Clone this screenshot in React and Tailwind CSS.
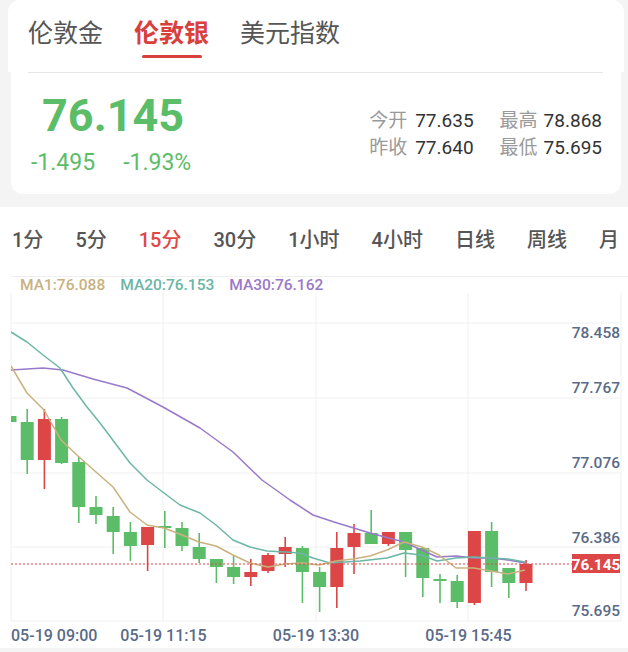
import React from 'react';

const GREEN = '#5cbd68';
const RED = '#dc4646';

// [bodyTop, bodyBottom, wickTop, wickBottom, up]
const candles = [
  [416, 422, 416, 422, false],
  [422, 460, 409, 474, false],
  [419, 460, 409, 489, true],
  [419, 463, 417, 464, false],
  [462, 507, 457, 523, false],
  [507, 515, 496, 524, false],
  [516, 532, 507, 554, false],
  [532, 546, 522, 561, false],
  [527, 545, 527, 571, true],
  [526, 528, 511, 548, false],
  [528, 546, 522, 551, false],
  [547, 559, 533, 563, false],
  [559, 567, 559, 583, false],
  [567, 577, 556, 584, false],
  [572, 577, 559, 586, true],
  [555, 571, 553, 573, true],
  [547, 554, 537, 567, true],
  [548, 572, 546, 603, false],
  [572, 587, 567, 612, false],
  [548, 587, 532, 608, true],
  [533, 547, 524, 574, true],
  [533, 544, 510, 544, false],
  [532, 544, 532, 546, true],
  [532, 550, 532, 577, false],
  [548, 578, 548, 597, false],
  [579, 581, 574, 603, false],
  [581, 602, 575, 608, false],
  [531, 603, 531, 605, true],
  [531, 572, 522, 587, false],
  [568, 583, 568, 598, false],
  [564, 583, 560, 591, true],
];

const ma1 = '11,366 27,393 44,410 61,440 78,456 96,472 113,487 130,512 147,525 164,528 182,535 199,542 216,546 233,555 250,563 268,567 285,564 302,563 319,565 336,561 353,559 370,556 387,550 404,542 422,547 439,555 456,568 474,568 491,571 508,574 525,570';
const ma20 = '11,332 27,342 43,355 60,368 73,388 87,407 100,423 115,443 130,463 147,480 164,493 180,505 200,513 216,525 233,540 250,547 267,551 285,552 300,553 313,558 330,563 360,561 387,558 404,553 421,555 437,561 456,558 474,557 491,558 508,559 525,562';
const ma30 = '11,370 43,368 63,370 93,379 127,388 163,407 200,428 233,452 262,480 290,500 313,515 334,522 370,533 404,542 437,557 456,556 474,558 491,558 508,560 525,563';

const tabs = ['伦敦金', '伦敦银', '美元指数'];
const periods = ['1分', '5分', '15分', '30分', '1小时', '4小时', '日线', '周线', '月'];

const priceLabels = [
  ['78.458', 337.5],
  ['77.767', 392.5],
  ['77.076', 467.5],
  ['76.386', 542.5],
  ['75.695', 615.5],
];

const Chart = () => (
  <svg width="628" height="355" viewBox="0 293 628 355" className="block">
    <defs>
      <clipPath id="plot">
        <rect x="11" y="293" width="610" height="328" />
      </clipPath>
    </defs>
    {/* grid */}
    {[11, 163, 316, 468, 621].map((x) => (
      <line key={x} x1={x} x2={x} y1={293} y2={621} stroke="#f0f0f0" strokeWidth="1" />
    ))}
    {[323, 398, 473, 547, 621].map((y) => (
      <line key={y} x1={11} x2={621} y1={y} y2={y} stroke="#f0f0f0" strokeWidth="1" />
    ))}

    <g clipPath="url(#plot)">
      {candles.map(([bt, bb, wt, wb, up], i) => {
        const c = 10 + 17.2 * i;
        const color = up ? RED : GREEN;
        return (
          <g key={i}>
            <line x1={c} x2={c} y1={wt} y2={wb} stroke={color} strokeWidth="1.6" />
            <rect x={c - 6.5} y={bt} width="13" height={Math.max(bb - bt, 1.5)} fill={color} />
          </g>
        );
      })}
      <polyline points={ma30} fill="none" stroke="#9a79c9" strokeWidth="1.5" strokeLinejoin="round" />
      <polyline points={ma20} fill="none" stroke="#6bb6a6" strokeWidth="1.5" strokeLinejoin="round" />
      <polyline points={ma1} fill="none" stroke="#c9b27f" strokeWidth="1.5" strokeLinejoin="round" />
    </g>

    {/* current price */}
    <line x1="11" x2="572" y1="564" y2="564" stroke="#e04444" strokeWidth="1" strokeDasharray="2 2" />
    <rect x="572" y="554" width="48" height="19" fill="#dc4646" />
    <text x="596" y="569.5" textAnchor="middle" fill="#ffffff" fontSize="15.5" fontWeight="700">
      76.145
    </text>

    {priceLabels.map(([t, y]) => (
      <text key={t} x="620" y={y} textAnchor="end" fill="#5a6a88" fontSize="15.5" fontWeight="500">
        {t}
      </text>
    ))}

    <text x="11" y="641" fill="#5a6a88" fontSize="16" fontWeight="500">05-19 09:00</text>
    <text x="163.5" y="641" textAnchor="middle" fill="#5a6a88" fontSize="16" fontWeight="500">05-19 11:15</text>
    <text x="316" y="641" textAnchor="middle" fill="#5a6a88" fontSize="16" fontWeight="500">05-19 13:30</text>
    <text x="468.5" y="641" textAnchor="middle" fill="#5a6a88" fontSize="16" fontWeight="500">05-19 15:45</text>
  </svg>
);

export default function App() {
  return (
    <div className="w-[628px] h-[652px] overflow-hidden bg-[#f4f4f4] [font-family:Roboto,'Noto_Sans_CJK_SC',sans-serif]">
      {/* Symbol tabs */}
      <div className="ml-[8px] mr-[4px] h-[72px] bg-white rounded-t-[12px] flex items-start pl-[20px] gap-[31px]">
        {tabs.map((t, i) => (
          <div key={t} className="flex flex-col pt-[21px]">
            <span
              className={`text-[25px] leading-[25px] ${
                i === 1 ? 'text-[#d9403c] font-bold' : 'text-[#555555]'
              }`}
            >
              {t}
            </span>
            {i === 1 && <div className="mt-[9px] mx-auto w-[60px] h-[3px] rounded-full bg-[#d9403c]" />}
          </div>
        ))}
      </div>

      {/* Price card */}
      <div className="ml-[11px] mr-[7px] h-[122px] bg-white rounded-b-[12px] flex flex-col">
        <div className="ml-[17px] mr-[18px] h-px bg-[#e6e6e6]" />
        <div className="flex-1 flex items-center justify-between pl-[20px] pr-[19px]">
          <div className="flex flex-col">
            <p className="ml-[11px] text-[45px] leading-none font-bold text-[#5cbd68]">76.145</p>
            <div className="mt-[14px] flex gap-[28px] text-[23px] leading-[22px] text-[#5cbd68]">
              <span>-1.495</span>
              <span>-1.93%</span>
            </div>
          </div>
          <div className="grid grid-cols-[auto_auto] gap-x-[26px] text-[19px] leading-[27px]">
            <p>
              <span className="text-[#9a9a9a]">今开</span>
              <span className="ml-[8px] text-[#333333]">77.635</span>
            </p>
            <p>
              <span className="text-[#9a9a9a]">最高</span>
              <span className="ml-[6px] text-[#333333]">78.868</span>
            </p>
            <p>
              <span className="text-[#9a9a9a]">昨收</span>
              <span className="ml-[8px] text-[#333333]">77.640</span>
            </p>
            <p>
              <span className="text-[#9a9a9a]">最低</span>
              <span className="ml-[6px] text-[#333333]">75.695</span>
            </p>
          </div>
        </div>
      </div>

      {/* Chart section */}
      <div className="mt-[13px] bg-white">
        <div className="h-[69px] pb-[3px] flex items-center gap-[32px] pl-[12px] whitespace-nowrap overflow-hidden">
          {periods.map((p) => (
            <span
              key={p}
              className={`text-[20px] leading-[24px] font-medium ${
                p === '15分' ? 'text-[#e04848]' : 'text-[#555555]'
              }`}
            >
              {p}
            </span>
          ))}
        </div>
        <div className="ml-[11px] h-px bg-[#eeeeee]" />
        <div className="flex gap-[15px] pl-[20px] text-[15.5px] leading-[16px] font-medium">
          <span className="text-[#c9b27f]">MA1:76.088</span>
          <span className="text-[#6bb6a6]">MA20:76.153</span>
          <span className="text-[#9a79c9]">MA30:76.162</span>
        </div>
        <Chart />
      </div>
    </div>
  );
}
